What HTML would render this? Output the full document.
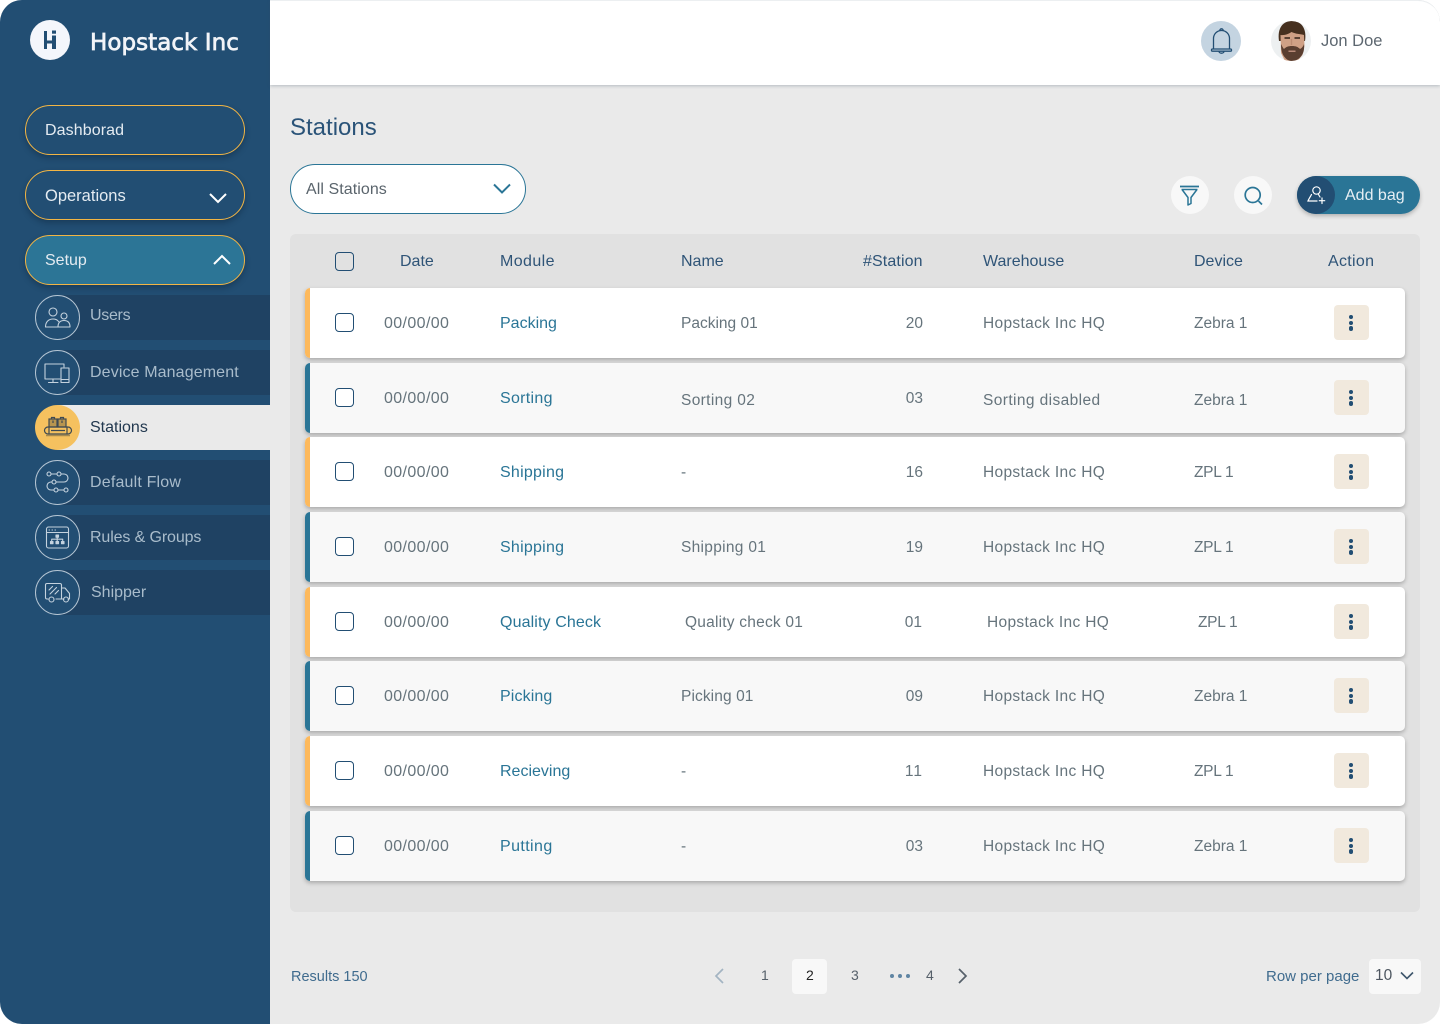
<!DOCTYPE html>
<html lang="en"><head><meta charset="utf-8"><title>Stations</title>
<style>
*{box-sizing:border-box}
html,body{margin:0;padding:0;background:#fff}
body{width:1440px;height:1024px;overflow:hidden;position:relative;font-family:"Liberation Sans",sans-serif}
#app{position:absolute;left:0;top:0;width:1440px;height:1024px;background:#eaeaea;border-radius:22px;overflow:hidden}
#side{position:absolute;left:0;top:0;width:270px;height:1024px;background:#224e73}
#top{position:absolute;left:270px;top:0;width:1170px;height:85px;background:#fff;border-top:1px solid #eceff1;border-top-right-radius:22px;box-shadow:0 1px 3px rgba(60,80,100,.3)}
.a{position:absolute;white-space:nowrap}
.t{position:absolute;white-space:nowrap;font-size:15.5px;line-height:20px;color:#66747c;transform:translateY(-50%);margin-top:1px;letter-spacing:.2px}
.d{font-size:16px;letter-spacing:.38px;left:384px}
.w{letter-spacing:.33px}
.z{letter-spacing:0}
.zp{letter-spacing:-.3px}
.pill{position:absolute;left:25px;width:220px;height:50px;border:1.5px solid #f2b544;border-radius:25px;box-shadow:0 3px 6px rgba(10,30,50,.35);color:#e4ebf1;font-size:16px;line-height:49px;padding-left:19px}
.band{position:absolute;left:57px;width:213px;height:45px;background:#1f4263}
.circ{position:absolute;left:35px;width:45px;height:45px;border:1.2px solid #b5c5d3;border-radius:50%;background:#224e73}
.lbl{position:absolute;left:90px;font-size:16px;line-height:20px;color:#a9bccb;white-space:nowrap;transform:translateY(-50%)}
#panel{position:absolute;left:290px;top:234px;width:1130px;height:678px;background:#e1e1e1;border-radius:6px}
.row{position:absolute;left:305px;width:1100px;height:70px;border-radius:5px;box-shadow:0 2px 4px rgba(0,0,0,.25);background:#fff;overflow:hidden}
.row.b{background:#f8f8f8}
.row i{position:absolute;left:0;top:0;bottom:0;width:5px;background:#fdb95c}
.row.b i{background:#2a7596}
.cb{position:absolute;left:335px;width:19px;height:19px;border:1.4px solid #224e73;border-radius:4px;background:#fff}
.act{position:absolute;left:1334px;width:35px;height:35px;background:#f1e9dd;border-radius:4px}
.act b{position:absolute;left:14.8px;width:4.4px;height:4.4px;border-radius:50%;background:#224e73}
.act b:nth-child(1){top:9.8px}.act b:nth-child(2){top:15.6px}.act b:nth-child(3){top:21.4px}
.h{position:absolute;white-space:nowrap;font-size:16px;line-height:20px;color:#2f5477;transform:translateY(-50%);top:262px}
.m{color:#2a7596;font-size:16px;letter-spacing:.12px}
.r{text-align:right;width:60px;letter-spacing:0}
svg{position:absolute;overflow:visible}
.ic{fill:none;stroke:#c4d2de;stroke-width:1.1;stroke-linecap:round;stroke-linejoin:round}
</style></head><body><div id="app">
<div id="side">
<div class="a" style="left:30px;top:20px;width:40px;height:40px;border-radius:50%;background:#f4f6fb"></div>
<svg style="left:30px;top:20px" width="40" height="40"><path d="M14 11h3v9.500h5v-5h4V29h-4v-5.500h-5V29h-3z" fill="#224e73"/><rect x="22" y="10.500" width="4" height="3.200" fill="#224e73"/></svg>
<div class="a" style="left:90px;top:28px;font-family:'DejaVu Sans',sans-serif;font-size:23px;line-height:30px;color:#f2f4f8;-webkit-text-stroke:.7px #f2f4f8;letter-spacing:.05px">Hopstack Inc</div>
<div class="pill" style="top:105px;letter-spacing:.1px">Dashborad</div>
<div class="pill" style="top:170px;line-height:50px;font-size:16.500px">Operations</div>
<svg style="left:209px;top:192px" width="18" height="12"><path d="M1 2l8 8 8-8" fill="none" stroke="#fff" stroke-width="2"/></svg>
<div class="band" style="top:295px"></div><div class="band" style="top:350px"></div><div class="a" style="left:57px;top:405px;width:213px;height:45px;background:#eaeaea"></div><div class="band" style="top:460px"></div><div class="band" style="top:515px"></div><div class="band" style="top:570px"></div>
<div class="pill" style="top:235px;background:#2c7596">Setup</div>
<svg style="left:213px;top:254px" width="18" height="12"><path d="M1 10l8-8 8 8" fill="none" stroke="#fff" stroke-width="2"/></svg>

<div class="circ" style="top:295px"></div>
<svg class="ic" style="left:35px;top:295px" width="45" height="45"><circle cx="18" cy="17" r="4"/><circle cx="29" cy="21" r="3"/><path d="M10.500 32c0-5 3-8 7.500-8 2.500 0 4.500 1 5.500 2.500M23 32c0-4 2-6.500 6-6.500s6 2.500 6 6.500zM10.500 32H23"/></svg>
<div class="lbl" style="top:316px;letter-spacing:-.3px">Users</div>

<div class="circ" style="top:350px"></div>
<svg class="ic" style="left:35px;top:350px" width="45" height="45"><path d="M25 29H10V14h19v3M18 29v3M13.500 32.500H23"/><rect x="26" y="18" width="8" height="14.500"/><path d="M26 29.500h8"/></svg>
<div class="lbl" style="top:373px;letter-spacing:.12px">Device Management</div>

<div class="a" style="left:35px;top:405px;width:45px;height:45px;border-radius:50%;background:#f5c15f"></div>
<svg style="left:35px;top:405px" width="45" height="45" fill="none" stroke="#3f4a52" stroke-width="1.200"><rect x="14" y="14" width="8" height="8" fill="#b8954f"/><rect x="23" y="14" width="8" height="8" fill="#b8954f"/><path d="M16.500 14v-1.500h3V14M25.500 14v-1.500h3V14M18 15.500v2.500M27 15.500v2.500"/><rect x="9.500" y="22" width="27" height="7" rx="3.500"/><path d="M14 22v7M32 22v7M16 25.500h14"/><path d="M11 30.500h24" stroke="#a5894f" stroke-width="1.400"/></svg>
<div class="lbl" style="top:428px;color:#22384f">Stations</div>

<div class="circ" style="top:460px"></div>
<svg class="ic" style="left:35px;top:460px" width="45" height="45"><circle cx="14" cy="14" r="2"/><circle cx="24" cy="14" r="2"/><path d="M16 14h6M26 14h3a4 4 0 0 1 0 8h-8M17 22h-1a4 4 0 0 0 0 8h3M23 30h6"/><circle cx="19" cy="22" r="2"/><circle cx="21" cy="30" r="2"/><circle cx="31" cy="30" r="2"/></svg>
<div class="lbl" style="top:483px;letter-spacing:.18px">Default Flow</div>

<div class="circ" style="top:515px"></div>
<svg class="ic" style="left:35px;top:515px" width="45" height="45"><rect x="11.500" y="12" width="22" height="21" rx="2"/><path d="M11.500 17.500h22M14 15h.5M17 15h.5M20 15h.5"/><rect x="21" y="20" width="2.500" height="2.200" fill="#c4d2de"/><rect x="15.500" y="26.500" width="2.500" height="2.200" fill="#c4d2de"/><rect x="21" y="26.500" width="2.500" height="2.200" fill="#c4d2de"/><rect x="26.500" y="26.500" width="2.500" height="2.200" fill="#c4d2de"/><path d="M22.200 22.200v4.300M16.700 26.500v-2.300h11v2.300"/></svg>
<div class="lbl" style="top:538px;letter-spacing:-.12px">Rules &amp; Groups</div>

<div class="circ" style="top:570px"></div>
<svg class="ic" style="left:35px;top:570px" width="45" height="45"><path d="M13 29h-1a1.500 1.500 0 0 1-1.500-1.500V15a1.500 1.500 0 0 1 1.500-1.500h13a1.500 1.500 0 0 1 1.500 1.500v14H21M26.500 18h3.500l4.500 5.500V29H33M26.500 29H29"/><circle cx="16.500" cy="29.500" r="2.500"/><circle cx="31" cy="29.500" r="2.500"/><path d="M14 20l3.500-3.500M15 24l6.500-6.500M20 24l3.500-3.500"/></svg>
<div class="lbl" style="top:593px;left:91px">Shipper</div>
</div>

<div id="top"></div>
<div class="a" style="left:1201px;top:21px;width:40px;height:40px;border-radius:50%;background:#c4d4e1"></div>
<svg style="left:1201px;top:21px" width="40" height="40" fill="none" stroke="#224e73" stroke-width="1.300" stroke-linejoin="round"><path d="M12.500 28V17.500a8 8 0 0 1 16 0V28"/><rect x="10.500" y="28" width="20" height="2.200" rx="1"/><path d="M18.800 9.500a1.700 1.700 0 0 1 3.400 0M18 30.200a2.500 2 0 0 0 5 0"/></svg>
<svg style="left:1271px;top:21px" width="40" height="40"><defs><clipPath id="av"><circle cx="20" cy="20" r="20"/></clipPath></defs><g clip-path="url(#av)"><rect width="40" height="40" fill="#edf0f1"/><path d="M8 20C6 7 12 0 21 0s15 7 13 20z" fill="#46301f"/><path d="M9.500 14c4 .5 8-1 11-3 4 2 9 2 12.500 3l.5 11-2 9-5 6H14l-4-8z" fill="#cfa085"/><path d="M10 23c1 2 2 4 3 5 2-2 4-3 8-3 4 0 6 1 8 3 2-1 3.500-3 4-5 .5 6-.5 10-4 13.500-2 2-5 3.500-8 3.500-3 0-5.500-1.500-7-3.500-3-3-4-8-4-13.500z" fill="#5a3e30"/><path d="M13.500 17h5.500M23.500 17h5.500" stroke="#33221a" stroke-width="1.400"/><rect x="17.500" y="29.500" width="7" height="1.500" fill="#b98a78"/><path d="M20.500 18v6" stroke="#bb8b72" stroke-width="1.400"/></g></svg>
<div class="a" style="left:1321px;top:31px;font-size:16.500px;line-height:20px;color:#5d6770">Jon Doe</div>

<div class="a" style="left:290px;top:113px;font-size:24px;line-height:30px;color:#2a5378">Stations</div>
<div class="a" style="left:290px;top:164px;width:236px;height:50px;background:#fff;border:1.200px solid #2a7596;border-radius:25px"></div>
<div class="a" style="left:306px;top:180px;font-size:16px;line-height:20px;color:#5a646c;letter-spacing:.07px">All Stations</div>
<svg style="left:493px;top:183px" width="18" height="12"><path d="M1 1.500l8 8 8-8" fill="none" stroke="#2a7596" stroke-width="2"/></svg>

<div class="a" style="left:1171px;top:176px;width:38px;height:38px;border-radius:50%;background:#f8f8f8"></div>
<svg style="left:1171px;top:176px" width="38" height="38" fill="none" stroke="#2a7596" stroke-width="1.500" stroke-linejoin="round"><path d="M9 10.500h19" stroke-width="1.800"/><path d="M10.500 13.500h16M11 13.500l6 8v7.500l3-1.500v-6l6-8"/></svg>
<div class="a" style="left:1234px;top:176px;width:38px;height:38px;border-radius:50%;background:#f8f8f8"></div>
<svg style="left:1234px;top:176px" width="38" height="38" fill="none" stroke="#2a7596" stroke-width="1.700"><circle cx="18.700" cy="19" r="7.500"/><path d="M24.500 25l3.500 3.500"/></svg>
<div class="a" style="left:1297px;top:176px;width:123px;height:38px;border-radius:19px;background:#2a7596;box-shadow:0 2px 4px rgba(0,0,0,.25)"></div>
<div class="a" style="left:1297px;top:176px;width:38px;height:38px;border-radius:50%;background:#224e73"></div>
<svg style="left:1297px;top:176px" width="38" height="38" fill="none" stroke="#fff" stroke-width="1.200" stroke-linecap="round"><circle cx="19.500" cy="14.500" r="3.700"/><path d="M14.500 18.500c-1 2-3 5-3.500 6.500h9M21.500 18.500l1.500 2.500M25 22v5.500M22.300 24.700h5.400"/></svg>
<div class="a" style="left:1345px;top:186px;font-size:16px;line-height:20px;color:#e6eef3">Add bag</div>

<div id="panel"></div>
<div class="cb" style="top:252px;background:#e1e1e1"></div>
<div class="h" style="left:400px">Date</div><div class="h" style="left:500px;letter-spacing:.4px">Module</div><div class="h" style="left:681px">Name</div><div class="h" style="left:863px;letter-spacing:.12px">#Station</div><div class="h" style="left:983px">Warehouse</div><div class="h" style="left:1194px">Device</div><div class="h" style="left:1328px;letter-spacing:.3px">Action</div>

<div class="row" style="top:288px"><i></i></div>
<div class="cb" style="top:313px"></div><div class="t d" style="top:323px">00/00/00</div><div class="t m" style="left:500px;top:323px;letter-spacing:0">Packing</div><div class="t" style="left:681px;top:323px;letter-spacing:0">Packing 01</div><div class="t r" style="left:863px;top:323px">20</div><div class="t w" style="left:983px;top:323px">Hopstack Inc HQ</div><div class="t z" style="left:1194px;top:323px">Zebra 1</div>
<div class="act" style="top:305px"><b></b><b></b><b></b></div>

<div class="row b" style="top:363px"><i></i></div>
<div class="cb" style="top:388px"></div><div class="t d" style="top:398px">00/00/00</div><div class="t m" style="left:500px;top:398px;letter-spacing:.3px">Sorting</div><div class="t" style="left:681px;top:400px;letter-spacing:.35px">Sorting 02</div><div class="t r" style="left:863px;top:398px">03</div><div class="t" style="left:983px;top:400px;letter-spacing:.4px">Sorting disabled</div><div class="t z" style="left:1194px;top:400px">Zebra 1</div>
<div class="act" style="top:380px"><b></b><b></b><b></b></div>

<div class="row" style="top:437px"><i></i></div>
<div class="cb" style="top:462px"></div><div class="t d" style="top:472px">00/00/00</div><div class="t m" style="left:500px;top:472px;letter-spacing:.25px">Shipping</div><div class="t" style="left:681px;top:472px">-</div><div class="t r" style="left:863px;top:472px">16</div><div class="t w" style="left:983px;top:472px">Hopstack Inc HQ</div><div class="t zp" style="left:1194px;top:472px">ZPL 1</div>
<div class="act" style="top:454px"><b></b><b></b><b></b></div>

<div class="row b" style="top:512px"><i></i></div>
<div class="cb" style="top:537px"></div><div class="t d" style="top:547px">00/00/00</div><div class="t m" style="left:500px;top:547px;letter-spacing:.25px">Shipping</div><div class="t" style="left:681px;top:547px;letter-spacing:.3px">Shipping 01</div><div class="t r" style="left:863px;top:547px">19</div><div class="t w" style="left:983px;top:547px">Hopstack Inc HQ</div><div class="t zp" style="left:1194px;top:547px">ZPL 1</div>
<div class="act" style="top:529px"><b></b><b></b><b></b></div>

<div class="row" style="top:587px"><i></i></div>
<div class="cb" style="top:612px"></div><div class="t d" style="top:622px">00/00/00</div><div class="t m" style="left:500px;top:622px">Quality Check</div><div class="t" style="left:685px;top:622px;letter-spacing:.22px">Quality check 01</div><div class="t r" style="left:862px;top:622px">01</div><div class="t w" style="left:987px;top:622px">Hopstack Inc HQ</div><div class="t zp" style="left:1198px;top:622px">ZPL 1</div>
<div class="act" style="top:604px"><b></b><b></b><b></b></div>

<div class="row b" style="top:661px"><i></i></div>
<div class="cb" style="top:686px"></div><div class="t d" style="top:696px">00/00/00</div><div class="t m" style="left:500px;top:696px">Picking</div><div class="t" style="left:681px;top:696px;letter-spacing:.1px">Picking 01</div><div class="t r" style="left:863px;top:696px">09</div><div class="t w" style="left:983px;top:696px">Hopstack Inc HQ</div><div class="t z" style="left:1194px;top:696px">Zebra 1</div>
<div class="act" style="top:678px"><b></b><b></b><b></b></div>

<div class="row" style="top:736px"><i></i></div>
<div class="cb" style="top:761px"></div><div class="t d" style="top:771px">00/00/00</div><div class="t m" style="left:500px;top:771px;letter-spacing:0">Recieving</div><div class="t" style="left:681px;top:771px">-</div><div class="t r" style="left:863px;top:771px;letter-spacing:1px">11</div><div class="t w" style="left:983px;top:771px">Hopstack Inc HQ</div><div class="t zp" style="left:1194px;top:771px">ZPL 1</div>
<div class="act" style="top:753px"><b></b><b></b><b></b></div>

<div class="row b" style="top:811px"><i></i></div>
<div class="cb" style="top:836px"></div><div class="t d" style="top:846px">00/00/00</div><div class="t m" style="left:500px;top:846px;letter-spacing:.4px">Putting</div><div class="t" style="left:681px;top:846px">-</div><div class="t r" style="left:863px;top:846px">03</div><div class="t w" style="left:983px;top:846px">Hopstack Inc HQ</div><div class="t z" style="left:1194px;top:846px">Zebra 1</div>
<div class="act" style="top:828px"><b></b><b></b><b></b></div>

<div class="a" style="left:291px;top:967px;font-size:14.500px;line-height:20px;color:#3f6b8e">Results 150</div>
<svg style="left:714px;top:968px" width="10" height="16"><path d="M9 1L2 8l7 7" fill="none" stroke="#a3b4c2" stroke-width="1.700"/></svg>
<div class="a" style="left:761px;top:965px;font-size:14px;line-height:20px;color:#56606a">1</div>
<div class="a" style="left:792px;top:959px;width:35px;height:35px;background:#f8f8f8;border-radius:4px"></div>
<div class="a" style="left:806px;top:965px;font-size:14px;line-height:20px;color:#222">2</div>
<div class="a" style="left:851px;top:965px;font-size:14px;line-height:20px;color:#56606a">3</div>
<svg style="left:889px;top:973px" width="24" height="6" fill="#5f85a3"><circle cx="3" cy="3" r="2"/><circle cx="11" cy="3" r="2"/><circle cx="19" cy="3" r="2"/></svg>
<div class="a" style="left:926px;top:965px;font-size:14px;line-height:20px;color:#56606a">4</div>
<svg style="left:958px;top:968px" width="10" height="16"><path d="M1 1l7 7-7 7" fill="none" stroke="#56606a" stroke-width="1.700"/></svg>
<div class="a" style="left:1266px;top:967px;font-size:15px;line-height:20px;color:#3f6b8e">Row per page</div>
<div class="a" style="left:1369px;top:959px;width:52px;height:35px;background:#f8f8f8;border-radius:4px"></div>
<div class="a" style="left:1375px;top:966px;font-size:15.500px;line-height:20px;color:#4d5660">10</div>
<svg style="left:1400px;top:971px" width="14" height="10"><path d="M1 1.500l6 6 6-6" fill="none" stroke="#3e566c" stroke-width="1.600"/></svg>
</div></body></html>
